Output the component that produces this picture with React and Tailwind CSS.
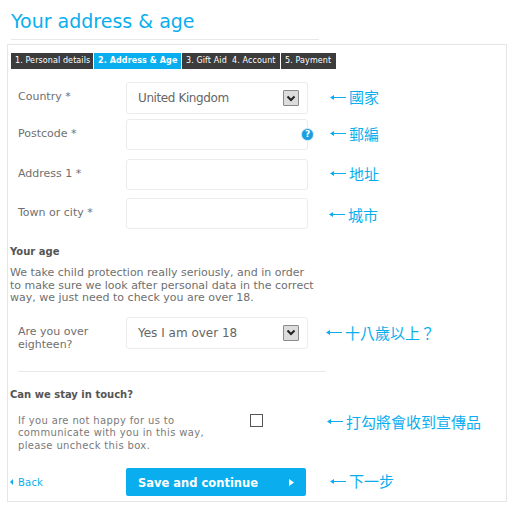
import React from 'react';

const verdana = '[font-family:Verdana,"DejaVu_Sans",sans-serif]';

const steps = [
  { label: '1. Personal details', width: 'w-[82px]' },
  { label: '2. Address & Age', width: 'w-[87px]', active: true },
  { label: '3. Gift Aid  4. Account', width: 'w-[98px]' },
  { label: '5. Payment', width: 'w-[55px]' },
];

function Arrow() {
  return (
    <svg width="16" height="7" viewBox="0 0 16 7" className="shrink-0">
      <path d="M1 3.5h15" stroke="#0aaeee" strokeWidth="1" />
      <path d="M0 3.5 4 1v5z" fill="#0aaeee" />
    </svg>
  );
}

function Note({ text, className = '' }) {
  return (
    <div className={`flex items-center gap-[3px] text-[15px] leading-5 text-[#0aaeee] [font-family:"Noto_Sans_CJK_TC",sans-serif] ${className}`}>
      <Arrow />
      <span className="whitespace-nowrap">{text}</span>
    </div>
  );
}

function Chevron() {
  return (
    <span className="flex h-4 w-4 items-center justify-center rounded-[1px] border border-[#8a8a8a] bg-[#dcdcdc]">
      <svg width="10" height="7" viewBox="0 0 10 7">
        <path d="M1.5 1.5 5 5l3.5-3.5" fill="none" stroke="#222" strokeWidth="2" />
      </svg>
    </span>
  );
}

function Field({ label, value, valueClass = '', select, help, note, noteClass, height = 'h-8', rowClass = '' }) {
  return (
    <div className={`flex ${rowClass}`}>
      <div className="w-[116px] shrink-0 pl-[8px] text-[11px] leading-[13px] text-[#6f6f6f]">
        {label}
      </div>
      <div className={`relative flex ${height} w-[182px] shrink-0 items-center justify-between rounded-[3px] border border-[#ececec] bg-white pl-[11px] pr-[8px] text-[12px] text-[#666]`}>
        <span className={valueClass}>{value}</span>
        {select && <Chevron />}
        {help && (
          <span className="absolute -right-[6px] top-[9px] flex h-[11px] w-[11px] items-center justify-center rounded-full bg-[#1b9ee0] text-[9px] font-bold leading-none text-white ring-1 ring-[#c4e6f7]">
            ?
          </span>
        )}
      </div>
      <Note text={note} className={noteClass} />
    </div>
  );
}

export default function App() {
  return (
    <div className={`relative h-[511px] w-[519px] overflow-hidden bg-white ${verdana}`}>
      <div className="ml-[11px] h-10 w-[308px] border-b border-[#e8e8e8] pt-[8px] text-[19px] leading-[26px] text-[#0aaeee]">
        Your address &amp; age
      </div>

      <div className="ml-[7px] mt-1 h-[458px] w-[500px] border border-[#e6e6e6] pl-[2px] pt-[8px]">
        <div className="ml-[1px] flex gap-[1px]">
          {steps.map((s) => (
            <div
              key={s.label}
              className={`flex h-4 items-center whitespace-pre pl-[4px] text-[8px] tracking-[0.1px] text-white ${s.width} ${s.active ? 'bg-[#0aaeee] font-bold' : 'bg-[#3c3c3c]'}`}
            >
              {s.label}
            </div>
          ))}
        </div>

        <div className="mt-[13px]">
          <Field rowClass="[&>div:first-child]:pt-[8px]" valueClass="tracking-[-0.4px]" label="Country *" value="United Kingdom" select note="國家" noteClass="ml-[22px] -mt-[2px]" />
          <Field rowClass="mt-[5px] [&>div:first-child]:pt-[8px]" height="h-[31px]" label="Postcode *" help note="郵編" noteClass="ml-[22px] -mt-[1px] h-[31px]" />
          <Field rowClass="mt-[9px] [&>div:first-child]:pt-[8px]" height="h-[31px]" label="Address 1 *" note="地址" noteClass="ml-[22px] -mt-[1px] h-[31px]" />
          <Field rowClass="mt-2 [&>div:first-child]:pt-[8px]" height="h-[31px]" label="Town or city *" note="城市" noteClass="ml-[21px] mt-[1px] h-[31px]" />
        </div>

        <div className="mt-[15px] text-[10px] font-bold leading-[13px] text-[#555]">Your age</div>
        <p className="mt-[9px] w-[305px] text-[11px] leading-[12.5px] text-[#6f6f6f]">
          We take child protection really seriously, and in order to make sure we look after personal data in the correct way, we just need to check you are over 18.
        </p>

        <Field
          rowClass="mt-[12px] [&>div:first-child]:pt-[8px]"
          label={<>Are you over<br />eighteen?</>}
          value="Yes I am over 18"
          select
          note="十八歲以上？"
          noteClass="ml-[18px] h-8"
        />

        <div className="ml-[8px] mt-[20px] h-px w-[308px] bg-[#e8e8e8]" />

        <div className="mt-[16px] text-[10px] font-bold leading-[13px] text-[#555]">Can we stay in touch?</div>

        <div className="mt-[14px] flex">
          <p className="w-[240px] shrink-0 pl-[8px] pr-[30px] text-[10px] leading-[12.5px] tracking-[0.35px] text-[#7a7a7a]">
            If you are not happy for us to communicate with you in this way, please uncheck this box.
          </p>
          <span className="-mt-[1px] h-[13px] w-[13px] shrink-0 border border-[#555] bg-white" />
          <Note text="打勾將會收到宣傳品" className="ml-[64px] -mt-[3px] h-5" />
        </div>

        <div className="mt-[16px] flex items-center">
          <a className="flex w-[116px] shrink-0 items-center gap-[5px] text-[10px] tracking-[0.2px] text-[#0aaeee]">
            <svg width="3" height="6" viewBox="0 0 3 6"><path d="M3 0v6L0 3z" fill="#0aaeee" /></svg>
            Back
          </a>
          <button className="flex h-7 w-[180px] shrink-0 items-center justify-between rounded-[2px] bg-[#0aaeee] pl-3 pr-3 text-[11.5px] font-bold text-white">
            <span className="pt-[3px]">Save and continue</span>
            <svg width="5" height="7" viewBox="0 0 5 7"><path d="M0 0v7l5-3.5z" fill="#fff" /></svg>
          </button>
          <Note text="下一步" className="ml-[24px] -mt-[2px]" />
        </div>
      </div>
    </div>
  );
}
